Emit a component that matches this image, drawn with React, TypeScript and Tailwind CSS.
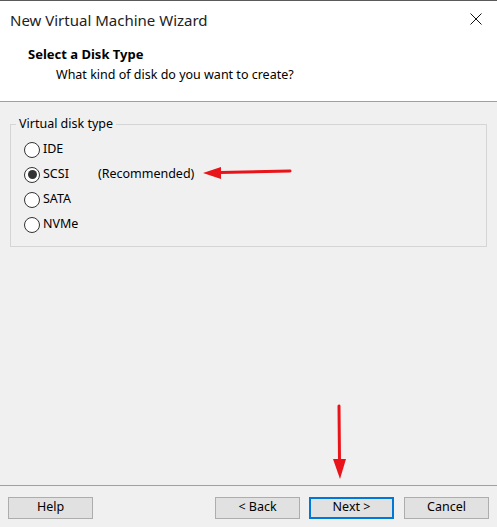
import React from 'react';

const font = { fontFamily: '"Noto Sans", "Open Sans", sans-serif' };

const Radio: React.FC<{ label: string; checked?: boolean; extra?: string }> = ({ label, checked, extra }) => (
  <div className="flex items-center h-[25px]">
    <span className="w-[16px] h-[16px] rounded-full border border-[#333] bg-white flex items-center justify-center">
      {checked && <span className="w-[9px] h-[9px] rounded-full bg-[#333]" />}
    </span>
    <span className="ml-[3px] text-[12.5px] text-[#000]">{label}</span>
    {extra && <span className="ml-[29px] text-[12.5px] text-[#000]">{extra}</span>}
  </div>
);

const Btn: React.FC<{ label: string; primary?: boolean; className?: string }> = ({ label, primary, className }) => (
  <button
    className={
      'w-[85px] h-[22px] bg-[#e1e1e1] text-[12.5px] text-black flex items-center justify-center ' +
      (primary ? 'border-2 border-[#0078d7]' : 'border border-[#adadad]') +
      ' ' +
      (className ?? '')
    }
  >
    {label}
  </button>
);

export default function App() {
  return (
    <div className="relative w-[497px] h-[527px] bg-[#f0f0f0] flex flex-col overflow-hidden" style={font}>
      <div className="h-[102px] bg-white border-t border-[#5a5a5a] border-b border-b-[#a0a0a0] flex flex-col shrink-0">
        <div className="flex items-center justify-between h-[36px] pl-[10px] pr-[15px]">
          <span className="text-[15px] text-[#222] pt-[2px]">New Virtual Machine Wizard</span>
          <svg width="12" height="12" viewBox="0 0 12 12">
            <path d="M0.5 0.5 L11.5 11.5 M11.5 0.5 L0.5 11.5" stroke="#111" strokeWidth="1" />
          </svg>
        </div>
        <div className="pl-[28px] mt-[9px] text-[13px] font-bold text-black leading-[17px]">Select a Disk Type</div>
        <div className="pl-[56px] mt-[3px] text-[12.5px] text-black leading-[17px]">What kind of disk do you want to create?</div>
      </div>

      <div className="flex-1 px-[10px] pt-[22px]">
        <div className="relative border border-[#d5d5d5] h-[123px] pl-[13px] pt-[12px]">
          <span className="absolute -top-[9px] left-[5px] px-[3px] bg-[#f0f0f0] text-[12.5px] text-black leading-[16px]">
            Virtual disk type
          </span>
          <Radio label="IDE" />
          <Radio label="SCSI" checked extra="(Recommended)" />
          <Radio label="SATA" />
          <Radio label="NVMe" />
        </div>
      </div>

      <div className="h-[42px] border-t border-[#a0a0a0] flex items-center px-[8px] pt-[2px] shrink-0">
        <Btn label="Help" />
        <div className="flex-1" />
        <Btn label="< Back" />
        <Btn label="Next >" primary className="ml-[9px]" />
        <Btn label="Cancel" className="ml-[10px]" />
      </div>

      <svg className="absolute left-[200px] top-[165px]" width="95" height="16" viewBox="0 0 95 16">
        <path d="M20 7.5 L90 6" stroke="#e8141a" strokeWidth="3" strokeLinecap="round" />
        <path d="M3 8 L21 2 L21 14 Z" fill="#e8141a" />
      </svg>
      <svg className="absolute left-[330px] top-[403px]" width="18" height="78" viewBox="0 0 18 78">
        <path d="M9 3 L9.5 58" stroke="#e8141a" strokeWidth="3" strokeLinecap="round" />
        <path d="M3 56 L16 56 L10 76 Z" fill="#e8141a" />
      </svg>
    </div>
  );
}
